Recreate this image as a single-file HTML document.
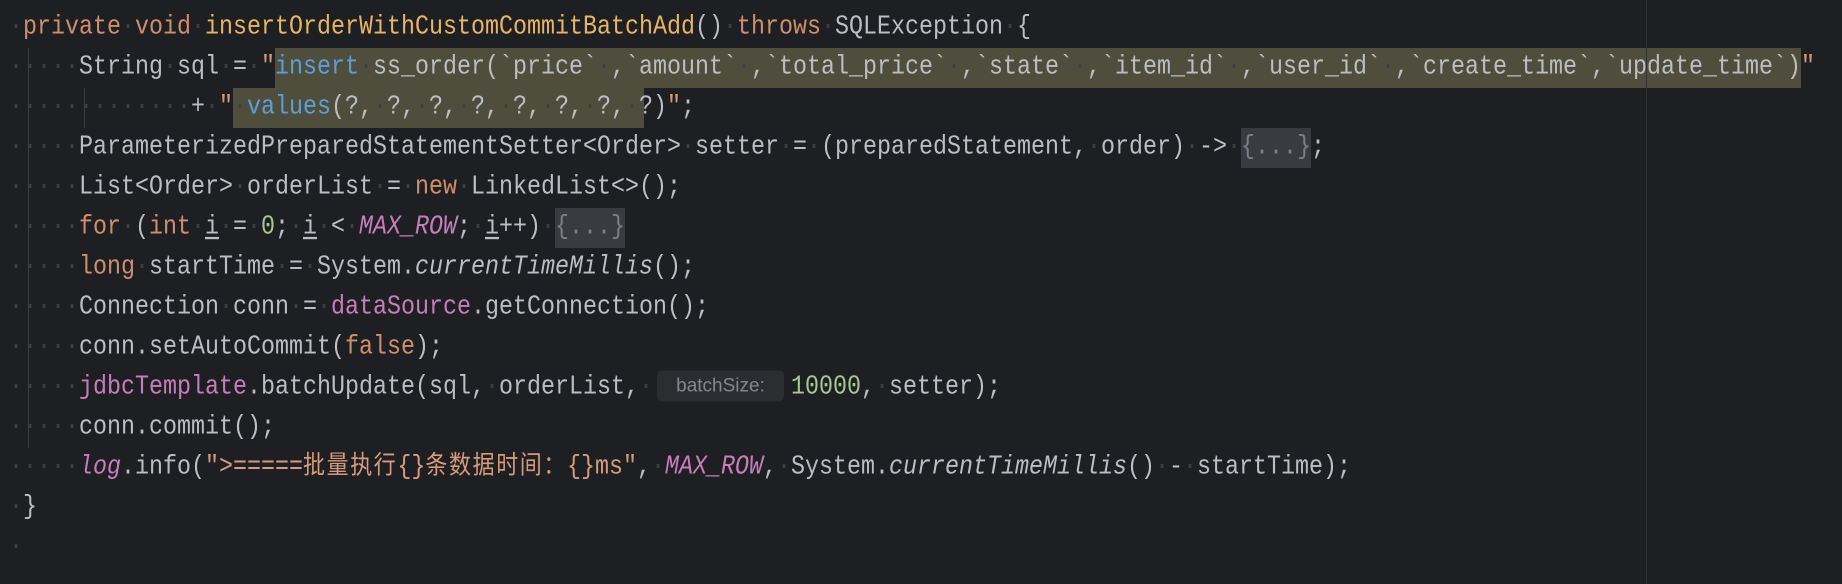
<!DOCTYPE html>
<html><head><meta charset="utf-8">
<style>
html,body{margin:0;padding:0;background:#1e1f22;width:1842px;height:584px;overflow:hidden;position:relative}
.hl{position:absolute;background:#4f4d3b}
.fold{position:absolute;background:#393b40}
.guide{position:absolute;width:1px;background:#393b40}
.rline{position:absolute;left:1646px;top:0;width:1px;height:584px;background:#313236}
.code{position:absolute;left:9px;top:0}
.ln{position:absolute;left:0;height:40px;line-height:40px;white-space:pre;font-family:"Liberation Mono","Noto Sans CJK SC",monospace;font-size:23.33px;color:#bcbec4}
.ln>span.in{display:inline-block;transform:scaleY(1.15);transform-origin:50% 55%}
.k{color:#cf8e6d}.m{color:#e7b566}.p{color:#c77dbb}.i{font-style:italic}.s{color:#d59b7c}.b{color:#5c9fd8}.n{color:#a9c78f}.g{color:#7a7e85}
.u{text-decoration:underline;text-underline-offset:3px}
.cj{letter-spacing:1.6px;font-family:"Noto Sans CJK SC","WenQuanYi Zen Hei",sans-serif;font-size:22px;line-height:20px}
.d{color:#3e4044}
.hint{display:inline-block;width:127px;height:31px;line-height:31px;margin:0 7px 0 4px;background:#2c2d30;border-radius:5px;color:#84878d;font-family:"Liberation Sans",sans-serif;font-size:19px;text-align:center;vertical-align:middle;transform:scaleY(0.87)}
</style></head><body>
<div class="hl" style="left:275px;top:48px;width:1526px;height:40px"></div>
<div class="hl" style="left:233px;top:88px;width:411px;height:40px"></div>
<div class="fold" style="left:1241px;top:128px;width:70px;height:40px"></div>
<div class="fold" style="left:555px;top:208px;width:70px;height:40px"></div>
<div class="guide" style="left:28px;top:48px;height:400px"></div>
<div class="guide" style="left:84px;top:88px;height:40px"></div>
<div class="rline"></div>
<div class="code">
<div class="ln" style="top:8px"><span class="in"> <span class="k">private void </span><span class="m">insertOrderWithCustomCommitBatchAdd</span>() <span class="k">throws </span>SQLException {</span></div>
<div class="ln" style="top:48px"><span class="in">     String sql = <span class="s">"</span><span class="b">insert</span> ss_order(`price` ,`amount` ,`total_price` ,`state` ,`item_id` ,`user_id` ,`create_time`,`update_time`)<span class="s">"</span></span></div>
<div class="ln" style="top:88px"><span class="in">             + <span class="s">"</span> <span class="b">values</span>(?, ?, ?, ?, ?, ?, ?, ?)<span class="s">"</span>;</span></div>
<div class="ln" style="top:128px"><span class="in">     ParameterizedPreparedStatementSetter&lt;Order&gt; setter = (preparedStatement, order) -&gt; <span class="g">{...}</span>;</span></div>
<div class="ln" style="top:168px"><span class="in">     List&lt;Order&gt; orderList = <span class="k">new </span>LinkedList&lt;&gt;();</span></div>
<div class="ln" style="top:208px"><span class="in">     <span class="k">for </span>(<span class="k">int </span><span class="u">i</span> = <span class="n">0</span>; <span class="u">i</span> &lt; <span class="p i">MAX_ROW</span>; <span class="u">i</span>++) <span class="g">{...}</span></span></div>
<div class="ln" style="top:248px"><span class="in">     <span class="k">long </span>startTime = System.<span class="i">currentTimeMillis</span>();</span></div>
<div class="ln" style="top:288px"><span class="in">     Connection conn = <span class="p">dataSource</span>.getConnection();</span></div>
<div class="ln" style="top:328px"><span class="in">     conn.setAutoCommit(<span class="k">false</span>);</span></div>
<div class="ln" style="top:368px"><span class="in">     <span class="p">jdbcTemplate</span>.batchUpdate(sql, orderList, <span class="hint">batchSize:</span><span class="n">10000</span>, setter);</span></div>
<div class="ln" style="top:408px"><span class="in">     conn.commit();</span></div>
<div class="ln" style="top:448px"><span class="in">     <span class="p i">log</span>.info(<span class="s">"&gt;=====<span class="cj">批量执行</span>{}<span class="cj">条数据时间：</span>{}ms"</span>, <span class="p i">MAX_ROW</span>, System.<span class="i">currentTimeMillis</span>() - startTime);</span></div>
<div class="ln" style="top:488px"><span class="in"> }</span></div>
<div class="ln" style="top:528px"><span class="in"> </span></div>
</div>
<script>
(function(){
  var w=document.createTreeWalker(document.querySelector('.code'),NodeFilter.SHOW_TEXT,null);
  var nodes=[];while(w.nextNode())nodes.push(w.currentNode);
  nodes.forEach(function(t){
    if(t.parentNode.classList&&t.parentNode.classList.contains('hint'))return;
    if(t.nodeValue.indexOf(' ')<0)return;
    var parts=t.nodeValue.split(' ');var f=document.createDocumentFragment();
    parts.forEach(function(p,idx){
      if(p)f.appendChild(document.createTextNode(p));
      if(idx<parts.length-1){var s=document.createElement('span');s.className='d';s.textContent='\u00b7';f.appendChild(s);}
    });
    t.parentNode.replaceChild(f,t);
  });
})();
</script>
</body></html>
